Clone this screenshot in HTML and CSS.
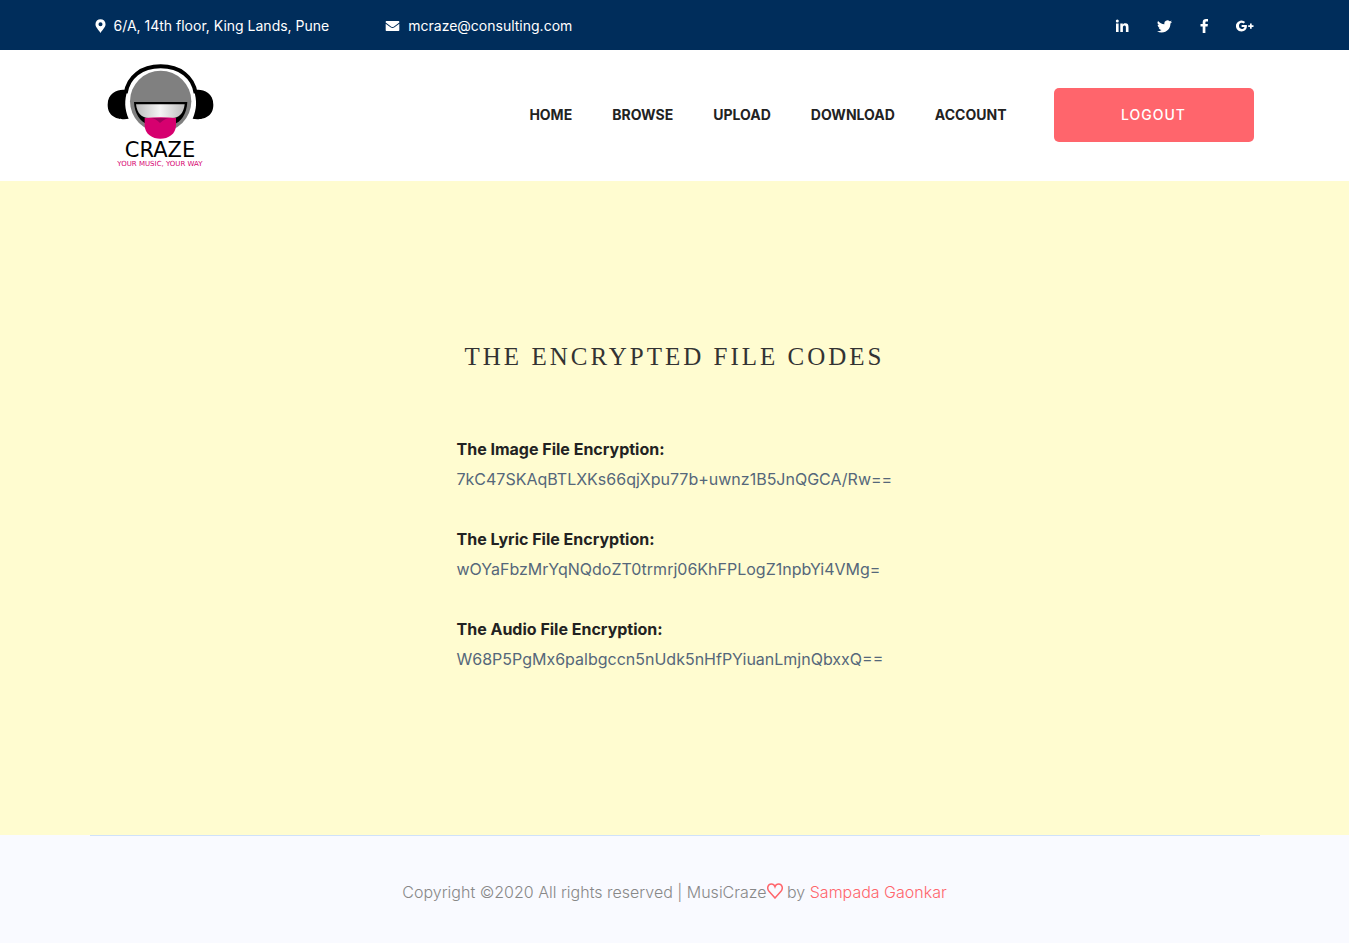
FILE: index.html
```html
<!DOCTYPE html>
<html lang="en">
<head>
<meta charset="utf-8">
<meta name="viewport" content="width=device-width, initial-scale=1">
<title>MusiCraze</title>
<link rel="stylesheet" href="styles.css">
</head>
<body>
<header>
  <div class="topbar">
    <div class="container topbar-row">
      <ul class="contact">
        <li><svg class="pin" viewBox="0 0 12 15" aria-hidden="true"><path fill-rule="evenodd" d="M6 0a5.5 5.5 0 0 0-5.5 5.5C.5 9 4 11.500 6 15c2-3.500 5.500-6 5.500-9.500A5.500 5.500 0 0 0 6 0zm0 3.400a2.200 2.200 0 1 1 0 4.400 2.200 2.200 0 0 1 0-4.400z"/></svg>6/A, 14th floor, King Lands, Pune</li>
        <li><svg class="mail" viewBox="0 0 15 11" aria-hidden="true"><path d="M0 .8Q0 0 .8 0h13.400q.8 0 .8.800v.9L9.200 6q-1.700 1.200-3.400 0L0 1.700zM0 3l5.300 4q2.200 1.500 4.400 0L15 3v7.200q0 .8-.8.800H.8q-.8 0-.8-.8z"/></svg>mcraze@consulting.com</li>
      </ul>
      <nav class="social" aria-label="Social">
        <a href="#" aria-label="LinkedIn"><svg width="14" height="14" viewBox="0 0 14 14"><path d="M1 4.500h2.600V13H1zM2.300.6a1.500 1.500 0 1 1 0 3 1.500 1.500 0 0 1 0-3zM5.300 4.500h2.500v1.200c.5-.9 1.400-1.400 2.600-1.400 2.500 0 3.100 1.600 3.100 3.900V13h-2.600V8.700c0-1.100-.1-2.200-1.400-2.200S7.900 7.500 7.900 8.600V13H5.300z"/></svg></a>
        <a href="#" aria-label="Twitter"><svg width="15" height="13" viewBox="0 0 24 20"><path d="M24 2.400c-.9.400-1.800.7-2.800.8 1-.6 1.800-1.600 2.200-2.700-1 .6-2 1-3.100 1.200A4.900 4.900 0 0 0 11.900 6.200C7.800 6 4.100 4 1.700 1.100a4.900 4.900 0 0 0 1.500 6.600c-.8 0-1.600-.2-2.200-.6 0 2.300 1.600 4.400 3.900 4.900-.7.200-1.500.2-2.200.1.600 2 2.400 3.400 4.600 3.400A9.900 9.900 0 0 1 0 17.500 14 14 0 0 0 7.500 19.700c9.100 0 14.300-7.700 14-14.600 1-.7 1.800-1.600 2.500-2.700z"/></svg></a>
        <a href="#" aria-label="Facebook"><svg width="8" height="14" viewBox="0 0 8 14"><path d="M8 .1v2.300H6.600c-1 0-1.200.5-1.200 1.200V5h2.500l-.3 2.500H5.400V14H2.700V7.500H.5V5h2.200V3.200C2.700 1.100 4 0 6 0c.9 0 1.700 0 2 .1z"/></svg></a>
        <a href="#" aria-label="Google Plus"><svg width="18" height="12" viewBox="0 0 18 12"><path d="M5.600 4.900v2.100h2.900C8.200 8.200 7.200 9.100 5.600 9.100a3.200 3.200 0 0 1 0-6.300c.8 0 1.500.3 2 .8L9.200 2A5.500 5.500 0 1 0 5.600 11.500c3.200 0 5.300-2.200 5.300-5.400 0-.4 0-.8-.1-1.200zM14 3.500h1.700v1.800h1.800V7h-1.800v1.800H14V7h-1.800V5.300H14z"/></svg></a>
      </nav>
    </div>
  </div>
  <div class="container mainbar">
    <a class="logo" href="#" aria-label="Craze home">
      <svg width="125" height="120" viewBox="0 0 375 360">
        <defs><linearGradient id="teeth"><stop offset="0" stop-color="#bbb"/><stop offset=".5" stop-color="#f4f4f4"/><stop offset="1" stop-color="#bbb"/></linearGradient></defs>
        <path d="M77 115C84 66 124 34 182 34s98 32 105 81" fill="none" stroke="#000" stroke-width="12"/>
        <path d="M82 107C70 100 23 105 23 149s45 46 63 42C73 162 73 135 82 107zM282 107c12-7 58-2 58 42s-44 46-62 42c13-29 13-56 4-84z"/>
        <circle cx="182" cy="139" r="92" fill="#808080"/>
        <path d="M102 141h160c-2 35-19 62-42 67h-76c-24-7-41-34-42-67z"/>
        <path d="M108 148h146c-3 28-18 41-35 41h-74c-19 0-34-13-37-41z" fill="url(#teeth)"/>
        <path d="M134 189q48-4 94 0v21c0 55-94 55-94 0z" fill="#d6006f"/>
        <path d="M153 189h54q-12 2-27 15-13-13-27-15z" fill="#a0005c"/>
        <text class="logo-name" x="180" y="307">CRAZE</text>
        <text class="logo-tag" x="180" y="332">YOUR MUSIC, YOUR WAY</text>
      </svg>
    </a>
    <nav class="menu" aria-label="Main">
      <a href="#">HOME</a>
      <a href="#">BROWSE</a>
      <a href="#">UPLOAD</a>
      <a href="#">DOWNLOAD</a>
      <a href="#">ACCOUNT</a>
    </nav>
    <button class="logout" type="button">LOGOUT</button>
  </div>
</header>
<main class="codes">
  <h1>THE ENCRYPTED FILE CODES</h1>
  <dl>
    <dt>The Image File Encryption:</dt>
    <dd>7kC47SKAqBTLXKs66qjXpu77b+uwnz1B5JnQGCA/Rw==</dd>
    <dt>The Lyric File Encryption:</dt>
    <dd>wOYaFbzMrYqNQdoZT0trmrj06KhFPLogZ1npbYi4VMg=</dd>
    <dt>The Audio File Encryption:</dt>
    <dd>W68P5PgMx6palbgccn5nUdk5nHfPYiuanLmjnQbxxQ==</dd>
  </dl>
</main>
<footer>
  <p>Copyright ©2020 All rights reserved | MusiCraze<svg class="heart" viewBox="0 0 16 16" aria-hidden="true"><path d="M8 15L2 8.300C-.5 5.300 1 1 4.300 1 6 1 7.400 2 8 3.700 8.600 2 10 1 11.700 1 15 1 16.500 5.300 14 8.300z"/></svg> by <a href="#">Sampada Gaonkar</a></p>
</footer>
</body>
</html>
```
FILE: styles.css
```css
* { box-sizing: border-box; }

body {
  margin: 0;
  min-height: 100vh;
  display: flex;
  flex-direction: column;
  background: #f9faff;
  color: #222;
  font-family: Inter, "Open Sans", sans-serif;
  font-size: 16px;
  line-height: 30px;
}

a { color: inherit; text-decoration: none; }

.container {
  width: 100%;
  max-width: 1170px;
  margin: 0 auto;
  padding: 0 6px 0 5px;
}

.topbar { background: #002d5b; color: #fff; font-size: 14px; }
.topbar svg { fill: #fff; }
.topbar-row {
  min-height: 50px;
  display: flex;
  align-items: center;
  justify-content: space-between;
}
.contact {
  display: flex;
  gap: 56px;
  margin: 0;
  padding: 2px 0 0;
  list-style: none;
}
.contact li { display: flex; align-items: center; gap: 8px; }
.pin { width: 11px; height: 14px; }
.mail { width: 15px; height: 10px; }
.social { display: flex; align-items: center; gap: 28px; padding-top: 2px; }
.social a { display: flex; }

header { background: #fff; }
.mainbar {
  min-height: 131px;
  display: flex;
  align-items: center;
  padding-bottom: 2px;
}
.logo { display: flex; margin: 0 auto 0 5px; }
.logo-name {
  font-family: "DejaVu Sans", sans-serif;
  font-size: 63px;
  text-anchor: middle;
}
.logo-tag {
  font-family: "DejaVu Sans", sans-serif;
  font-size: 21px;
  fill: #d6006f;
  text-anchor: middle;
}
.menu {
  display: flex;
  gap: 40px;
  margin-right: 47px;
  font-size: 14px;
  font-weight: 700;
}
.logout {
  width: 200px;
  height: 54px;
  border: 0;
  border-radius: 5px;
  background: #ff656c;
  color: #fff;
  font: 500 14px Inter, "Open Sans", sans-serif;
  letter-spacing: 1px;
}

.codes {
  flex: 1;
  display: flex;
  flex-direction: column;
  align-items: center;
  padding: 160px 16px;
  background: #fffcd0;
}
.codes h1 {
  margin: 0 0 61px;
  color: #333;
  font: 25px/32px "Liberation Serif", serif;
  letter-spacing: 3px;
}
.codes dl { width: 436px; max-width: 100%; margin: 0; }
.codes dt { font-weight: 700; }
.codes dd { margin: 0 0 30px; color: #55677a; overflow-wrap: anywhere; }
.codes dd:last-child { margin: 0; }

footer {
  width: 100%;
  max-width: 1170px;
  margin: 0 auto;
  padding: 41px 0 36px;
  border-top: 1px solid #d0e2fa;
  color: #888;
  font-weight: 300;
  text-align: center;
}
footer p { margin: 0; }
footer a { color: #ff656c; }
.heart {
  width: 16px;
  height: 16px;
  fill: none;
  stroke: #ff656c;
  stroke-width: 1.5;
  vertical-align: -1px;
}
```
